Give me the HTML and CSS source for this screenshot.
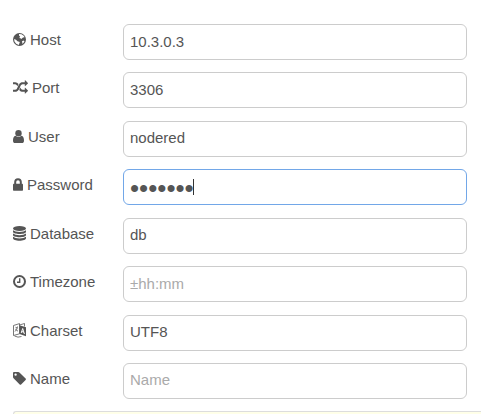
FILE: index.html
```html
<!DOCTYPE html>
<html lang="en">
<head>
<meta charset="utf-8">
<title>Database connection</title>
<link rel="stylesheet" href="styles.css">
</head>
<body>
<form class="form">
  <div class="row">
    <label class="label" for="host"><svg class="icon" width="13" height="13" viewBox="0 0 13 13"><circle cx="6.5" cy="6.5" r="6.5"/><path class="cut" d="M6 1L8.500 1.200 11 3 11.500 4.200 10 4.500 8.300 6 7.500 5.200 6.200 5 7.200 3.800 6 2.500zM1.100 6L3 6.800 4.500 8.300 6.800 9 6.300 10.500 5.800 12 3.200 10.800 1.500 8.500zM9 8.200L10.500 7.600 11.500 8.500 9.500 11z"/></svg><span>Host</span></label>
    <input class="field" id="host" type="text" value="10.3.0.3">
  </div>
  <div class="row">
    <label class="label" for="port"><svg class="icon" width="15" height="15" viewBox="0 0 1792 1792"><path d="M666 481q-60 92-137 273-22-45-37-72.500t-40.500-63.500-51-56.500-63-35-81.500-14.500h-224q-14 0-23-9t-9-23v-192q0-14 9-23t23-9h224q250 0 410 225zm1126 799q0 14-9 23l-320 320q-9 9-23 9-13 0-22.500-9.500t-9.500-22.500v-192q-32 0-85 .5t-81 1-73-1-71-5-64-10.500-63-18.500-58-28.500-59-40-55-53.500-56-69.500q59-93 136-273 22 45 37 72.500t40.500 63.500 51 56.500 63 35 81.500 14.500h256v-192q0-14 9-23t23-9q12 0 24 10l319 319q9 9 9 23zm0-896q0 14-9 23l-320 320q-9 9-23 9-13 0-22.500-9.500t-9.500-22.500v-192h-256q-48 0-87 15t-69 45-51 61.500-45 77.500q-32 62-78 171-29 66-49.500 111t-54 105-64 100-74 83-90 68.500-106.500 42-128 16.500h-224q-14 0-23-9t-9-23v-192q0-14 9-23t23-9h224q48 0 87-15t69-45 51-61.500 45-77.500q32-62 78-171 29-66 49.500-111t54-105 64-100 74-83 90-68.500 106.500-42 128-16.500h256v-192q0-14 9-23t23-9q12 0 24 10l319 319q9 9 9 23z"/></svg><span>Port</span></label>
    <input class="field" id="port" type="text" value="3306">
  </div>
  <div class="row">
    <label class="label" for="user"><svg class="icon" width="11" height="13" viewBox="0 0 11 13"><circle cx="5.500" cy="3.200" r="3.200"/><path d="M2.700 5.800Q5.500 8.200 8.300 5.800C10.500 6 11 8.500 11 10.700 11 12.200 10.200 13 9 13H2C.8 13 0 12.200 0 10.700 0 8.500.5 6 2.700 5.800z"/></svg><span>User</span></label>
    <input class="field" id="user" type="text" value="nodered">
  </div>
  <div class="row">
    <label class="label" for="password"><svg class="icon" width="10" height="13" viewBox="0 0 10 13"><path class="line" d="M2.200 6.500V4a2.800 2.800 0 0 1 5.600 0v2.500"/><rect y="5.800" width="10" height="7" rx=".7"/></svg><span>Password</span></label>
    <div class="password">
      <input class="field active" id="password" type="password" value="nodered">
      <span class="caret"></span>
    </div>
  </div>
  <div class="row">
    <label class="label" for="database"><svg class="icon" width="13" height="15" viewBox="0 0 13 15"><ellipse cx="6.500" cy="2.500" rx="6.500" ry="2.500"/><path d="M0 4.200Q2 6 6.500 6T13 4.200V5.700C13 7 10 8 6.500 8S0 7 0 5.700zM0 7.400Q2 9.200 6.500 9.200T13 7.400V8.900C13 10.200 10 11.200 6.500 11.200S0 10.200 0 8.900zM0 10.700Q2 12.500 6.500 12.500T13 10.700V12.200C13 13.700 10 14.700 6.500 14.700S0 13.700 0 12.200z"/></svg><span>Database</span></label>
    <input class="field" id="database" type="text" value="db">
  </div>
  <div class="row">
    <label class="label" for="timezone"><svg class="icon" width="13" height="13" viewBox="0 0 13 13"><circle class="line" cx="6.500" cy="6.500" r="5.500"/><path class="hand" d="M6.700 3.200V7.200H4"/></svg><span>Timezone</span></label>
    <input class="field" id="timezone" type="text" placeholder="±hh:mm">
  </div>
  <div class="row">
    <label class="label" for="charset"><svg class="icon" width="13" height="15" viewBox="0 0 13 15"><path class="thin" d="M.5 2.500L6.500.6V10.800L.5 12.500zM6.500 2L11.500.5V3.500M2.500 4.300L4.500 5M4.500 3.500Q4 7 2 8.500M2.300 6.200L5 8.200M1.500 13Q5 15 8.500 13.500"/><path d="M6.500 2.300L13 4.200V13.200L6.500 11z"/><path class="cutline" d="M8.200 10L9.700 5.500 11.400 11M8.700 8.500L10.800 9.200"/></svg><span>Charset</span></label>
    <input class="field" id="charset" type="text" value="UTF8">
  </div>
  <div class="row">
    <label class="label" for="name"><svg class="icon" width="13" height="13" viewBox="0 0 13 13"><path fill-rule="evenodd" d="M1 0H5.200Q6 0 6.700.7L12.600 6.600Q13.300 7.300 12.600 8L8.100 12.500Q7.400 13.200 6.700 12.500L.8 6.600Q0 5.800 0 5V1Q0 0 1 0zM2.600 1.400a1.200 1.200 0 1 0 0 2.400 1.200 1.200 0 0 0 0-2.400z"/></svg><span>Name</span></label>
    <input class="field" id="name" type="text" placeholder="Name">
  </div>
</form>
<div class="tip"></div>
</body>
</html>
```

FILE: styles.css
```css
* {
  box-sizing: border-box;
}

body {
  display: flex;
  flex-direction: column;
  min-height: 100vh;
  margin: 0;
  overflow-x: hidden;
  background: #fff;
  color: #555;
  font: 15px/20px "Liberation Sans", Arial, sans-serif;
}

.form {
  display: flex;
  flex: 1;
  flex-direction: column;
  justify-content: space-between;
  padding: 24px 14px 12px 13px;
}

.row {
  display: grid;
  grid-template-columns: 110px 1fr;
}

.label {
  display: flex;
  align-items: center;
  gap: 4px;
  height: 32px;
}

.icon {
  flex: none;
  margin-bottom: 1px;
  fill: #555;
}

.cut {
  fill: #fff;
}

.line,
.hand,
.thin,
.cutline {
  fill: none;
  stroke: #555;
  stroke-width: 2;
}

.hand {
  stroke-width: 1.4;
}

.thin {
  stroke-width: 0.8;
}

.cutline {
  stroke: #fff;
  stroke-width: 1;
}

.field {
  width: 100%;
  height: 36px;
  padding: 0 6px 2px;
  border: 1px solid #ccc;
  border-radius: 6px;
  outline: 0;
  background: #fff;
  color: #555;
  font: inherit;
}

.field::placeholder {
  color: #aaa;
  opacity: 1;
}

.password {
  position: relative;
}

.active {
  padding: 2px 6px 0;
  border-color: #72a7e8;
  font-size: 26px;
}

.caret {
  position: absolute;
  top: 10px;
  left: 70px;
  width: 1px;
  height: 16px;
  background: #333;
}

.tip {
  height: 3px;
  margin-left: 13px;
  border: 1px solid #ddd;
  border-width: 1px 0 0 1px;
  border-radius: 4px 0 0 0;
  background: #ffffe8;
}
```
